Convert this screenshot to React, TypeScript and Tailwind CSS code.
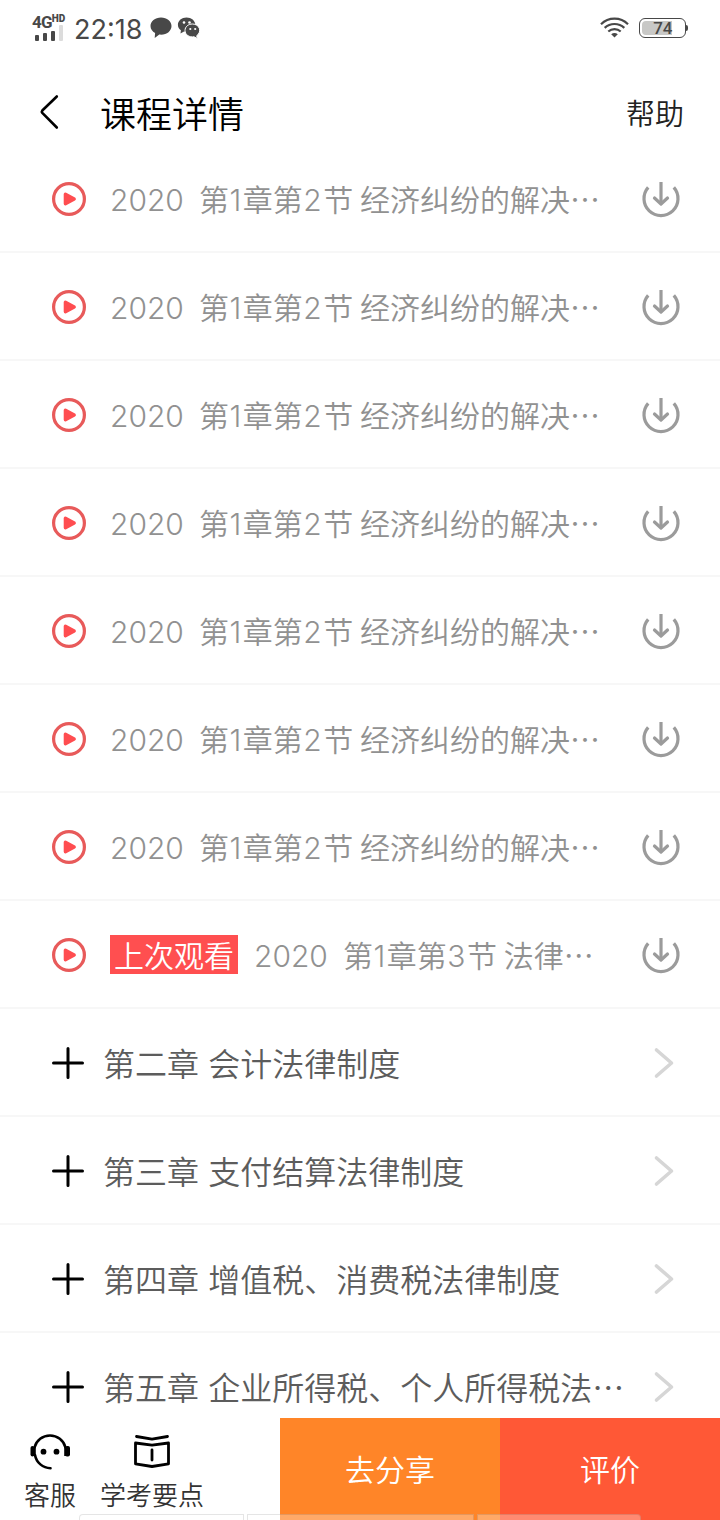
import { Fragment } from "react";

const lessons = [
  ...Array.from({ length: 7 }, (_, i) => ({
    id: i + 1,
    year: "2020",
    title: "第1章第2节 经济纠纷的解决…",
    last: false,
  })),
  { id: 8, year: "2020", title: "第1章第3节 法律…", last: true },
];

const chapters = [
  { id: 2, title: "第二章 会计法律制度" },
  { id: 3, title: "第三章 支付结算法律制度" },
  { id: 4, title: "第四章 增值税、消费税法律制度" },
  { id: 5, title: "第五章 企业所得税、个人所得税法…" },
];

// digits use the latin face, everything else stays in the CJK face
function MixedText({ text }: { text: string }) {
  return (
    <>
      {text.split(/(\d+)/).map((part, i) =>
        /\d/.test(part) ? (
          <span key={i} className="font-['Inter',sans-serif] text-[30px] font-[350]">
            {part}
          </span>
        ) : (
          <Fragment key={i}>{part}</Fragment>
        )
      )}
    </>
  );
}

function PlayIcon() {
  return (
    <svg className="h-9 w-9 shrink-0" viewBox="0 0 36 36" fill="none">
      <circle cx="18" cy="18" r="15.4" stroke="#e85a5a" strokeWidth="3.2" />
      <path
        d="M14.4 13.2v9.6l8.8-4.8z"
        fill="#ff4d50"
        stroke="#ff4d50"
        strokeWidth="3.4"
        strokeLinejoin="round"
      />
    </svg>
  );
}

function DownloadIcon() {
  return (
    <svg
      className="h-10 w-10 shrink-0"
      viewBox="0 0 40 40"
      fill="none"
      stroke="#9b9b9b"
      strokeWidth="3.2"
    >
      <path d="M7.2 8.4A17 17 0 1 0 32.8 8.4" />
      <path d="M20 3v22" />
      <path d="M13.500 19l6.500 6 6.500-6" strokeLinecap="round" strokeLinejoin="round" />
    </svg>
  );
}

function StatusBar() {
  return (
    <div className="flex h-14 items-center justify-between pr-8 pl-8 text-[#484848]">
      <div className="flex items-center">
        <div className="h-[26px] w-9">
          <div className="flex h-[14px] items-start font-['Roboto',sans-serif] leading-none font-bold">
            <span className="text-[17px] leading-[14px] tracking-[-0.8px]">4G</span>
            <span className="text-[10px] leading-[8px] font-black">HD</span>
          </div>
          <div className="flex h-3 items-end gap-1 pl-[3px]">
            <i className="h-[6px] w-1 shrink-0 rounded-[1px] bg-[#484848]" />
            <i className="h-2 w-1 shrink-0 rounded-[1px] bg-[#484848]" />
            <i className="h-[10px] w-1 shrink-0 rounded-[1px] bg-[#484848]" />
            <i className="h-4 w-1 shrink-0 rounded-[1px] bg-[#dcdcdc]" />
          </div>
        </div>
        <span className="w-[74px] pt-[3px] pl-[6px] font-['Inter',sans-serif] text-[27px] leading-8 font-normal">
          22:18
        </span>
        <svg className="ml-2 h-6 w-[22px]" viewBox="0 0 22 24" fill="currentColor">
          <path d="M11 1.500C5 1.500.5 5.300.5 10c0 3 1.800 5.600 4.600 7.100L4.700 22l4.600-3.400c7 .8 12.200-3.400 12.200-8.600C21.500 5.300 17 1.500 11 1.500z" />
        </svg>
        <svg className="ml-[5px] h-6 w-6" viewBox="0 0 24 24">
          <path
            d="M9.500 1.500C4.800 1.500.900 4.700.900 8.700c0 2.300 1.200 4.200 3 5.500L3.500 17.500l3.500-2c6 1.500 11.300-2 11.300-6.800C18.300 4.700 14.300 1.500 9.500 1.500z"
            fill="#484848"
          />
          <circle cx="7" cy="6.500" r="1.300" fill="#fff" />
          <circle cx="12.500" cy="6.500" r="1.300" fill="#fff" />
          <path
            d="M15.500 8c-4.200 0-7.500 2.700-7.500 6.500 0 4.200 4.400 7.100 9 6.300l3.400 1.700-.7-2.800c5.800-4.200 2.600-11.700-4.200-11.700z"
            fill="#484848"
            stroke="#fff"
            strokeWidth="1"
          />
          <circle cx="13.300" cy="13" r="1.100" fill="#fff" />
          <circle cx="18.200" cy="13" r="1.100" fill="#fff" />
        </svg>
      </div>
      <div className="flex items-center gap-[10px]">
        <svg
          className="h-[22px] w-[29px]"
          viewBox="0 0 29 22"
          fill="none"
          stroke="currentColor"
          strokeWidth="2.200"
        >
          <path d="M1 7.200C8.500-.2 20.500-.2 28 7.200" />
          <path d="M4.700 10.900c5.500-5.200 14.100-5.200 19.600 0" />
          <path d="M8.300 14.500c3.500-3.100 8.900-3.100 12.400 0" />
          <path d="M11.200 17.200c2-1.700 4.600-1.700 6.600 0L14.500 20.500z" fill="currentColor" stroke="none" />
        </svg>
        <div className="flex items-center">
          <div className="flex h-5 w-[47px] rounded-[6px] border border-[#484848] p-[2px]">
            <div className="flex w-[30px] items-center justify-end rounded-l-[4px] bg-[#c8c8c6] font-['Roboto',sans-serif] text-[17px] leading-none font-medium tracking-[-0.3px]">
              74
            </div>
          </div>
          <i className="h-[6px] w-[2px] rounded-r bg-[#484848]" />
        </div>
      </div>
    </div>
  );
}

function Header() {
  return (
    <header className="flex h-[89px] items-center pt-[23px] pr-9 pl-9 text-black">
      <svg
        className="h-9 w-7"
        viewBox="0 0 28 36"
        fill="none"
        stroke="currentColor"
        strokeWidth="2.600"
        strokeLinecap="round"
        strokeLinejoin="round"
      >
        <path d="M20.800 2.500L6.300 16.500q-1 1.200 0 2.400L20.800 33.500" />
      </svg>
      <h1 className="ml-9 flex-1 text-[36px] leading-[52px]">课程详情</h1>
      <span className="text-[29px] leading-10 text-[#222]">帮助</span>
    </header>
  );
}

function BottomBar() {
  return (
    <footer className="relative flex h-[102px] overflow-hidden bg-white">
      <div className="flex w-[280px] text-[26px] leading-9 text-[#333]">
        <div className="flex w-[100px] flex-col items-center pt-[14px]">
          <svg className="h-10 w-11" viewBox="0 0 44 40" fill="none" stroke="#000">
            <path
              d="M6.500 15.500A16 16 0 0 1 37.500 15.500M7 23A16 16 0 0 0 22.500 36.200"
              strokeWidth="2.600"
              strokeLinecap="round"
            />
            <path d="M6.500 15v9M37.500 15v9" strokeWidth="2.600" />
            <rect x="2.500" y="14" width="4" height="10.500" rx="2" fill="#000" stroke="none" />
            <rect x="37" y="14" width="5" height="10.500" rx="2" fill="#000" stroke="none" />
            <circle cx="15.500" cy="19.700" r="2.900" fill="#000" stroke="none" />
            <circle cx="28.500" cy="19.700" r="2.900" fill="#000" stroke="none" />
          </svg>
          <span className="mt-1">客服</span>
        </div>
        <div className="flex w-[104px] flex-col items-center pt-[14px]">
          <svg
            className="h-10 w-10"
            viewBox="0 0 40 40"
            fill="none"
            stroke="#000"
            strokeWidth="2.800"
            strokeLinecap="round"
            strokeLinejoin="round"
          >
            <path d="M4.500 4.500L20 7.200l15.500-2.700" />
            <path d="M3.500 11L20 13.200 36.500 11v20.800L20 34.500 3.500 31.800z" />
            <path d="M20 18v10" />
          </svg>
          <span className="mt-1 whitespace-nowrap">学考要点</span>
        </div>
      </div>
      <button className="w-[220px] bg-[#ff8528] pb-[2px] text-[30px] text-white">去分享</button>
      <button className="w-[220px] bg-[#ff5836] pb-[2px] text-[30px] text-white">评价</button>
      {/* system panel peeking over the bottom edge */}
      <div className="absolute top-[96px] left-[79px] flex h-3 gap-[3px]">
        <i className="w-[165px] rounded-tl-[4px] border border-black/10 bg-white/30" />
        <i className="w-[227px] border border-black/10 bg-white/30" />
        <i className="w-[164px] rounded-tr-[4px] border border-black/10 bg-white/30" />
      </div>
    </footer>
  );
}

export default function App() {
  return (
    <div className="flex h-[1520px] w-[720px] flex-col overflow-hidden bg-white font-['Noto_Sans_CJK_SC',sans-serif] font-[350]">
      <StatusBar />
      <Header />
      <ul className="min-h-0 flex-1 overflow-hidden">
        {lessons.map(({ id, year, title, last }) => (
          <li
            key={id}
            className="flex h-[108px] items-center border-b-2 border-[#f7f7f7] pt-[2px] pr-[39px] pl-[51px] text-[30px] text-[#919191]"
          >
            <PlayIcon />
            <div className="ml-[23px] flex flex-1 items-center whitespace-pre">
              {last && (
                <span className="mr-4 mb-[2px] h-[39px] w-32 bg-[#ff4f50] text-center leading-[39px] text-white">
                  上次观看
                </span>
              )}
              <span className="w-[89px]">
                <MixedText text={year} />
              </span>
              <span className="[&>span]:mr-[1.5px] [&>span]:ml-[0.5px]">
                <MixedText text={title} />
              </span>
            </div>
            <DownloadIcon />
          </li>
        ))}
        {chapters.map(({ id, title }) => (
          <li
            key={id}
            className="flex h-[108px] items-center border-b-2 border-[#f7f7f7] pt-[2px] pr-[44px] pl-[52px] text-[32px] text-[#5c5c5c]"
          >
            <svg
              className="h-8 w-8"
              viewBox="0 0 32 32"
              stroke="#000"
              strokeWidth="3"
              strokeLinecap="round"
            >
              <path d="M1.500 16h29M16 1.500v29" />
            </svg>
            <span className="ml-[19px] flex-1 pb-[2px] whitespace-nowrap [word-spacing:2px]">
              {title}
            </span>
            <svg
              className="h-8 w-6"
              viewBox="0 0 24 32"
              fill="none"
              stroke="#d6d6d6"
              strokeWidth="3.600"
              strokeLinecap="round"
              strokeLinejoin="round"
            >
              <path d="M4.500 3l15 13-15 13" />
            </svg>
          </li>
        ))}
      </ul>
      <BottomBar />
    </div>
  );
}
